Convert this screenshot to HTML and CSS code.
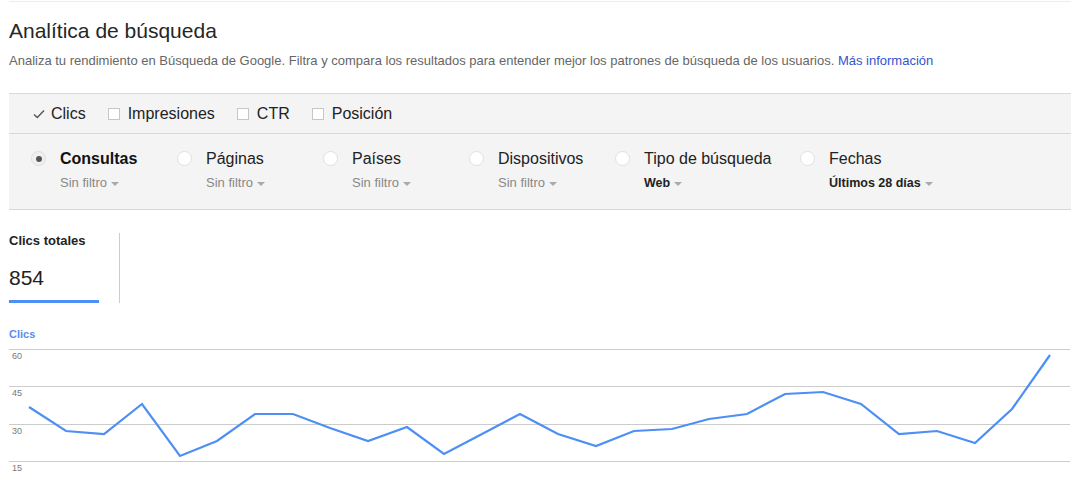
FILE: index.html
```html
<!DOCTYPE html>
<html lang="es">
<head>
<meta charset="utf-8">
<title>Analítica de búsqueda</title>
<link rel="stylesheet" href="styles.css">
</head>
<body>
<div class="page">
  <header class="head">
    <h1 class="title">Analítica de búsqueda</h1>
    <p class="desc">Analiza tu rendimiento en Búsqueda de Google. Filtra y compara los resultados para entender mejor los patrones de búsqueda de los usuarios. <a class="link" href="#">Más información</a></p>
  </header>

  <section class="panel">
    <div class="metrics">
      <label class="metric">
        <svg class="check" width="12" height="12" viewBox="0 0 12 12"><path d="M1 6.5 L4.3 9.5 L11 2.5" fill="none" stroke="#555" stroke-width="1.4"/></svg>
        <span>Clics</span>
      </label>
      <label class="metric"><span class="box"></span><span>Impresiones</span></label>
      <label class="metric"><span class="box"></span><span>CTR</span></label>
      <label class="metric"><span class="box"></span><span>Posición</span></label>
    </div>
    <div class="dims">
      <div class="dim">
        <span class="radio on"></span>
        <div class="dim-text">
          <div class="dim-label strong">Consultas</div>
          <div class="dim-sub">Sin filtro <span class="caret"></span></div>
        </div>
      </div>
      <div class="dim">
        <span class="radio"></span>
        <div class="dim-text">
          <div class="dim-label">Páginas</div>
          <div class="dim-sub">Sin filtro <span class="caret"></span></div>
        </div>
      </div>
      <div class="dim">
        <span class="radio"></span>
        <div class="dim-text">
          <div class="dim-label">Países</div>
          <div class="dim-sub">Sin filtro <span class="caret"></span></div>
        </div>
      </div>
      <div class="dim">
        <span class="radio"></span>
        <div class="dim-text">
          <div class="dim-label">Dispositivos</div>
          <div class="dim-sub">Sin filtro <span class="caret"></span></div>
        </div>
      </div>
      <div class="dim wide">
        <span class="radio"></span>
        <div class="dim-text">
          <div class="dim-label">Tipo de búsqueda</div>
          <div class="dim-sub set">Web <span class="caret"></span></div>
        </div>
      </div>
      <div class="dim">
        <span class="radio"></span>
        <div class="dim-text">
          <div class="dim-label">Fechas</div>
          <div class="dim-sub set">Últimos 28 días <span class="caret"></span></div>
        </div>
      </div>
    </div>
  </section>

  <section class="totals">
    <div class="total">
      <div class="total-label">Clics totales</div>
      <div class="total-value">854</div>
    </div>
    <div class="total-sep"></div>
  </section>

  <section class="chart">
    <div class="chart-title">Clics</div>
    <svg class="plot" width="1062" height="140" viewBox="9 340 1062 140">
      <g stroke="#ccc" stroke-width="1">
        <line x1="9" y1="349.5" x2="1070" y2="349.5"/>
        <line x1="9" y1="386.5" x2="1070" y2="386.5"/>
        <line x1="9" y1="424.5" x2="1070" y2="424.5"/>
        <line x1="9" y1="461.5" x2="1070" y2="461.5"/>
      </g>
      <g class="axis" fill="#777" font-size="9" font-family="Arial, 'Liberation Sans', sans-serif">
        <text x="12" y="359">60</text>
        <text x="12" y="396">45</text>
        <text x="12" y="434">30</text>
        <text x="12" y="471">15</text>
      </g>
      <polyline fill="none" stroke="#4d8ff4" stroke-width="2.2" stroke-linejoin="miter"
        points="29,407 66,431 104,434 142,404 180,456 217,441 255,414 293,414 330,428 368,441 407,427 444,454 482,434 520,414 558,434 596,446 634,431 672,429 709,419 747,414 785,394 823,392 861,404 899,434 937,431 975,443 1012,409 1050,355"/>
    </svg>
  </section>
</div>
</body>
</html>
```

FILE: styles.css
```css
* { box-sizing: border-box; }
html, body { margin: 0; padding: 0; background: #fff; }
body {
  font-family: Arial, "Liberation Sans", sans-serif;
  color: #222;
  width: 1079px;
  height: 488px;
  overflow: hidden;
}
.page {
  width: 1071px;
  padding-left: 9px;
  border-top: 1px solid #fff;
}
.head {
  border-top: 1px solid #ececec;
  padding-top: 17px;
}
.title {
  margin: 0;
  font-size: 21px;
  font-weight: normal;
  line-height: 24px;
  color: #262626;
}
.desc {
  margin: 10px 0 0;
  font-size: 13px;
  line-height: 16px;
  color: #666;
}
.link { color: #3355cc; text-decoration: none; }

.panel {
  margin-top: 24px;
  background: #f4f4f4;
  border-top: 1px solid #d8d8d8;
  border-bottom: 1px solid #d8d8d8;
  width: 1062px;
}
.metrics {
  display: flex;
  align-items: center;
  gap: 22px;
  height: 40px;
  padding-left: 24px;
  border-bottom: 1px solid #d8d8d8;
  font-size: 16px;
  color: #222;
}
.metric { display: flex; align-items: center; gap: 7px; }
.check { margin-right: -1px; }
.box {
  width: 12px;
  height: 12px;
  border: 1px solid #c6c6c6;
  background: #fff;
  margin-right: 1px;
}
.dims {
  display: flex;
  height: 75px;
  padding: 15px 0 0 22px;
}
.dim { display: flex; width: 146px; align-items: flex-start; }
.dim.wide { width: 185px; }
.radio {
  width: 15px;
  height: 15px;
  border-radius: 50%;
  background: #fff;
  border: 1px solid #e0e0e0;
  margin: 2px 14px 0 0;
  flex: none;
  display: flex;
  align-items: center;
  justify-content: center;
}
.radio.on { background: #f0f0f0; border-color: #ddd; }
.radio.on::after {
  content: "";
  width: 6px;
  height: 6px;
  border-radius: 50%;
  background: #555;
}
.dim-label { font-size: 16px; line-height: 19px; color: #222; }
.dim-label.strong { font-weight: bold; color: #111; }
.dim-sub {
  margin-top: 7px;
  font-size: 13px;
  line-height: 16px;
  color: #888;
  display: flex;
  align-items: center;
  gap: 4px;
}
.dim-sub.set { font-weight: bold; color: #222; font-size: 12.5px; }
.caret {
  width: 0;
  height: 0;
  border-left: 4px solid transparent;
  border-right: 4px solid transparent;
  border-top: 4px solid #aaa;
  margin-top: 1px;
}

.totals {
  display: flex;
  align-items: flex-start;
  padding-top: 23px;
}
.total {
  width: 90px;
  border-bottom: 3px solid #4d8ff4;
  height: 70px;
}
.total-label {
  font-size: 13px;
  font-weight: bold;
  line-height: 16px;
  color: #222;
}
.total-value {
  margin-top: 17px;
  font-size: 21px;
  line-height: 24px;
  color: #222;
}
.total-sep {
  width: 1px;
  height: 70px;
  background: #ccc;
  margin-left: 20px;
}

.chart { margin-top: 25px; }
.chart-title {
  font-size: 11px;
  font-weight: bold;
  line-height: 13px;
  color: #5b8def;
}
.plot { display: block; margin-top: -1px; }
```
